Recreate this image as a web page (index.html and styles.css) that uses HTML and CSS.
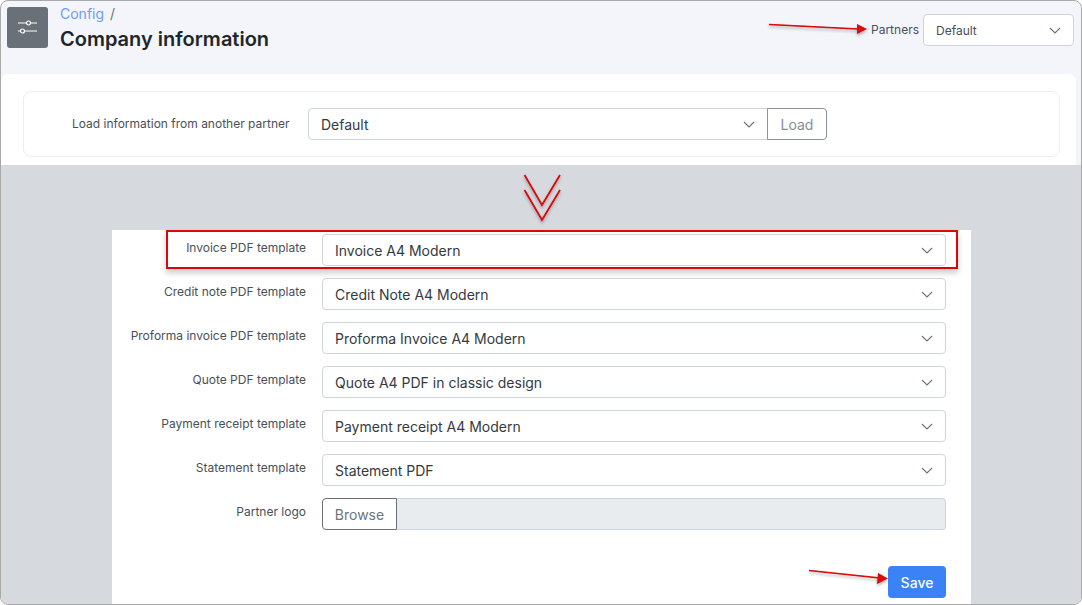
FILE: index.html
```html
<!DOCTYPE html>
<html lang="en">
<head>
<meta charset="utf-8">
<title>Company information</title>
<link rel="stylesheet" href="styles.css">
</head>
<body>
<div class="frame">
  <header class="top">
    <div class="top-left">
      <div class="tile">
        <svg width="20" height="16" viewBox="0 0 20 16" fill="none" stroke="#fff" stroke-width="1.2"><path d="M0 4H8.6M12.4 4H19M0 12H2.6M6.4 12H19"/><circle cx="10.5" cy="4" r="2"/><circle cx="4.5" cy="12" r="2"/></svg>
      </div>
      <div class="heading">
        <div class="crumb"><span class="crumb-link">Config</span><span class="crumb-sep">/</span></div>
        <h1 class="title">Company information</h1>
      </div>
    </div>
    <div class="top-right">
      <span class="partners-label">Partners</span>
      <div class="select select-small"><span>Default</span><svg class="chev" width="12" height="7" viewBox="0 0 12 7"><path d="M1 1l5 5 5-5"/></svg></div>
    </div>
  </header>
  <section class="upper">
    <div class="load-card">
      <span class="load-label">Load information from another partner</span>
      <div class="select select-load"><span>Default</span><svg class="chev" width="12" height="7" viewBox="0 0 12 7"><path d="M1 1l5 5 5-5"/></svg></div>
      <div class="load-btn">Load</div>
    </div>
  </section>
  <section class="lower">
    <div class="panel">
      <div class="row"><label class="row-label">Invoice PDF template</label><div class="select"><span>Invoice A4 Modern</span><svg class="chev" width="12" height="7" viewBox="0 0 12 7"><path d="M1 1l5 5 5-5"/></svg></div></div>
      <div class="row"><label class="row-label">Credit note PDF template</label><div class="select"><span>Credit Note A4 Modern</span><svg class="chev" width="12" height="7" viewBox="0 0 12 7"><path d="M1 1l5 5 5-5"/></svg></div></div>
      <div class="row"><label class="row-label">Proforma invoice PDF template</label><div class="select"><span>Proforma Invoice A4 Modern</span><svg class="chev" width="12" height="7" viewBox="0 0 12 7"><path d="M1 1l5 5 5-5"/></svg></div></div>
      <div class="row"><label class="row-label">Quote PDF template</label><div class="select"><span>Quote A4 PDF in classic design</span><svg class="chev" width="12" height="7" viewBox="0 0 12 7"><path d="M1 1l5 5 5-5"/></svg></div></div>
      <div class="row"><label class="row-label">Payment receipt template</label><div class="select"><span>Payment receipt A4 Modern</span><svg class="chev" width="12" height="7" viewBox="0 0 12 7"><path d="M1 1l5 5 5-5"/></svg></div></div>
      <div class="row"><label class="row-label">Statement template</label><div class="select"><span>Statement PDF</span><svg class="chev" width="12" height="7" viewBox="0 0 12 7"><path d="M1 1l5 5 5-5"/></svg></div></div>
      <div class="row"><label class="row-label">Partner logo</label><div class="file"><div class="browse">Browse</div><div class="file-name"></div></div></div>
      <div class="actions"><div class="save">Save</div></div>
    </div>
  </section>
  <div class="red-box"></div>
  <svg class="marks" width="1082" height="605" viewBox="0 0 1082 605" fill="none">
    <defs><filter id="sh" x="-20%" y="-50%" width="140%" height="250%"><feDropShadow dx="0" dy="2" stdDeviation="1.5" flood-color="#000" flood-opacity=".3"/></filter></defs>
    <g filter="url(#sh)" stroke="#d90707" stroke-width="1.7">
      <path d="M769 24.5L858 29"/>
      <path d="M809 570.500L880 578"/>
      <path d="M524.500 175L542 205L560 175"/>
      <path d="M524.500 190L542 220L560 190"/>
    </g>
    <g filter="url(#sh)" fill="#d90707">
      <path d="M857 24L867 29L857 34Z"/>
      <path d="M878 573L888 578.500L877 584Z"/>
    </g>
  </svg>
</div>
</body>
</html>
```
FILE: styles.css
```css
* { box-sizing: border-box; }
html, body { margin: 0; padding: 0; }
body { width: 1082px; height: 605px; overflow: hidden; background: #fff; font-family: Inter, "Liberation Sans", sans-serif; color: #212529; }
.frame { position: relative; width: 1082px; height: 605px; overflow: hidden; display: flex; flex-direction: column; border: 1px solid #a9a9a9; border-radius: 8px; background: #f3f5fa; }
.top { height: 73px; flex: none; display: flex; justify-content: space-between; padding: 5.500px 7px 0 6px; }
.top-left { display: flex; gap: 12px; }
.tile { width: 41px; height: 41px; border-radius: 3px; background: #697077; display: flex; align-items: center; justify-content: center; }
.heading { display: flex; flex-direction: column; }
.crumb { font-size: 14px; line-height: 14px; height: 20px; display: flex; gap: 6px; }
.crumb-link { color: #6d9bf7; }
.crumb-sep { color: #6c757d; }
.title { margin: 0; font-size: 20px; line-height: 24px; font-weight: 600; color: #212529; }
.top-right { display: flex; align-items: flex-start; gap: 4px; padding-top: 7.500px; }
.partners-label { font-size: 12px; line-height: 31px; color: #495057; }
.select { flex: 1; height: 32px; display: flex; align-items: center; justify-content: space-between; padding: 0 12px; background: #fff; border: 1px solid #ced4da; border-radius: 4px; font-size: 14px; color: #343a40; }
.select-small { flex: none; width: 151px; height: 32px; font-size: 12px; color: #495057; }
.select-load { flex: none; width: 460px; border-radius: 4px 0 0 4px; }
.chev { fill: none; stroke: #6c757d; stroke-width: 1.200; flex: none; }
.upper { height: 91px; flex: none; margin: 0 5px 0 0; background: #fff; border-radius: 8px 8px 0 0; padding: 17px 16px 0 22px; }
.load-card { height: 66px; display: flex; align-items: center; border: 1px solid #eceef1; border-radius: 8px; padding-left: 48px; }
.load-label { width: 236px; font-size: 12px; color: #495057; margin-top: -1px; }
.load-btn { width: 60px; height: 32px; display: flex; align-items: center; justify-content: center; margin-left: -1px; border: 1px solid #8a9198; border-radius: 0 4px 4px 0; font-size: 14px; color: #868e96; }
.lower { flex: 1; min-height: 0; background: #d6d9de; padding: 65px 0 0 111px; }
.panel { width: 859px; height: 380px; background: #fff; padding: 4px 25px 0 0; display: flex; flex-direction: column; gap: 12px; }
.row { display: flex; align-items: flex-start; gap: 16px; height: 32px; }
.row-label { width: 194px; text-align: right; font-size: 12px; line-height: 28px; color: #495057; flex: none; }
.file { flex: 1; height: 32px; display: flex; }
.browse { width: 75px; height: 32px; display: flex; align-items: center; justify-content: center; border: 1px solid #697077; border-radius: 4px 0 0 4px; font-size: 14px; color: #6c757d; background: #fff; }
.file-name { flex: 1; background: #e9ecef; border: 1px solid #ced4da; border-left: 0; border-radius: 0 4px 4px 0; }
.actions { display: flex; justify-content: flex-end; padding-top: 24px; }
.save { width: 58px; height: 32px; display: flex; align-items: center; justify-content: center; background: #3b82f6; border-radius: 4px; color: #fff; font-size: 14px; font-weight: 500; }
.red-box { position: absolute; left: 165px; top: 229px; width: 792px; height: 39px; border: 2.500px solid #d90707; box-shadow: 0 4px 6px rgba(0,0,0,.2); pointer-events: none; }
.marks { position: absolute; left: -1px; top: -1px; pointer-events: none; }
```
